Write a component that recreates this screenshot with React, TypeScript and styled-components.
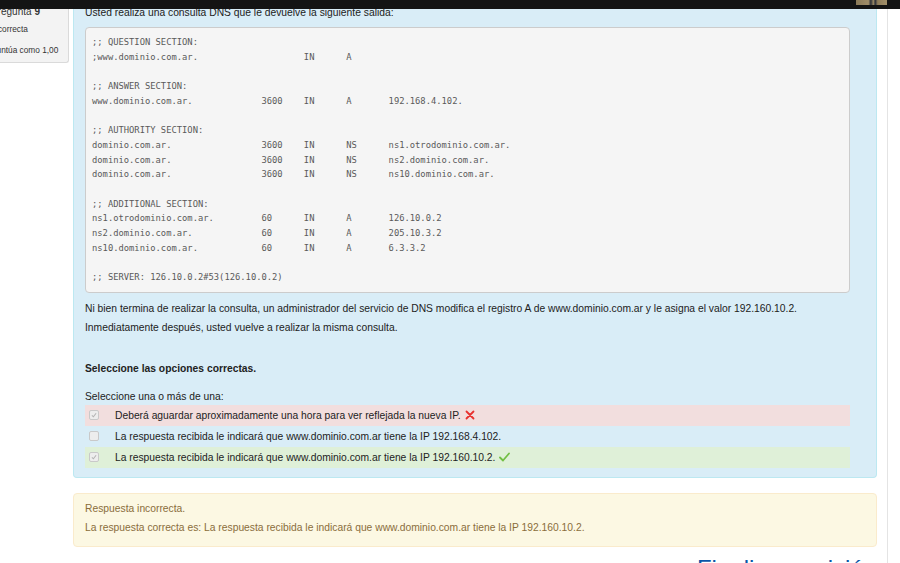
import styled, { createGlobalStyle } from 'styled-components';

const GlobalStyle = createGlobalStyle`
  html, body {
    margin: 0;
    padding: 0;
    background: #ffffff;
    font-family: "Liberation Sans", Arial, sans-serif;
    color: #333;
    overflow: hidden;
  }
`;

const TopBar = styled.div`
  position: fixed;
  top: 0;
  left: 0;
  right: 0;
  height: 9px;
  background: #141414;
  display: flex;
  justify-content: flex-end;
  padding-right: 13px;
  z-index: 10;
`;

const Avatar = styled.div`
  width: 31px;
  height: 5px;
  background: linear-gradient(90deg, #8b7a58 0%, #a08d68 40%, #2a2e38 48%, #9a8964 56%, #2c303a 62%, #8f7d5a 70%, #a3906a 100%);
`;

const Page = styled.div`
  display: flex;
  align-items: flex-start;
  height: 563px;
  overflow: hidden;
`;

const InfoBox = styled.div`
  flex: none;
  width: 78px;
  height: 63px;
  margin-left: -9px;
  box-sizing: border-box;
  background: #f3f3f3;
  border: 1px solid #dadada;
  border-top: none;
  border-left: none;
  border-radius: 0 0 3px 0;
  padding-top: 6px;
  font-size: 8.3px;
  color: #333;
`;

const QNo = styled.div`
  font-size: 10px;
  line-height: 12px;
  white-space: nowrap;

  b {
    font-weight: bold;
  }
`;

const InfoLine = styled.div<{ $top: number }>`
  margin-top: ${p => p.$top}px;
  line-height: 10px;
  white-space: nowrap;
`;

const Main = styled.div`
  flex: none;
  width: 804px;
  margin-left: 4px;
  display: flex;
  flex-direction: column;
`;

const Formulation = styled.div`
  background: #d9edf7;
  border: 1px solid #bce8f1;
  border-top: none;
  border-radius: 0 0 4px 4px;
  padding: 7px 26px 9px 11px;
  font-size: 10.3px;
  color: #222;
`;

const Intro = styled.p`
  margin: 0 0 8px;
  line-height: 12px;
`;

const Pre = styled.pre`
  margin: 0;
  padding: 7px 6px;
  background: #f5f5f5;
  border: 1px solid #cccccc;
  border-radius: 4px;
  font-family: "DejaVu Sans Mono", "Liberation Mono", monospace;
  font-size: 8.8px;
  line-height: 14.69px;
  color: #5a5a5a;
  tab-size: 8;
  white-space: pre;
  overflow: hidden;
`;

const Para = styled.p`
  margin: 6px 0 0;
  line-height: 19px;
`;

const Prompt = styled.p`
  margin: 22px 0 0;
  line-height: 19px;
  font-weight: bold;
`;

const Answer = styled.div`
  margin-top: 12px;
`;

const AnswerLabel = styled.div`
  line-height: 14px;
  margin-bottom: 1px;
`;

const Option = styled.div<{ $state?: 'wrong' | 'right' }>`
  height: 21px;
  display: flex;
  align-items: center;
  padding-left: 4px;
  background: ${p => (p.$state === 'wrong' ? '#f2dede' : p.$state === 'right' ? '#dff0d8' : 'transparent')};
  color: #222;
`;

const Check = styled.span<{ $checked?: boolean }>`
  flex: none;
  width: 8px;
  height: 8px;
  margin-right: 16px;
  border: 1px solid #c9c9c9;
  border-radius: 2px;
  background: #ededed;
  display: flex;
  align-items: center;
  justify-content: center;

  svg {
    display: ${p => (p.$checked ? 'block' : 'none')};
  }
`;

const Mark = styled.svg`
  margin-left: 4px;
  flex: none;
`;

const Feedback = styled.div`
  margin-top: 15px;
  background: #fcf8e3;
  border: 1px solid #faebcc;
  border-radius: 4px;
  padding: 5px 11px 9px;
  font-size: 10.3px;
  line-height: 19px;
  color: #8a6d3b;
`;

const Nav = styled.div`
  margin-top: 9px;
  display: flex;
  justify-content: flex-end;
`;

const NavLink = styled.a`
  font-size: 24px;
  line-height: 25px;
  color: #0a56a8;
  text-decoration: none;
  white-space: nowrap;
`;

const Gutter = styled.div`
  flex: none;
  align-self: stretch;
  width: 10px;
  border-right: 1px solid #e4e4e4;
`;

const dnsOutput = [
  ';; QUESTION SECTION:',
  ';www.dominio.com.ar.\t\t\tIN\tA',
  '',
  ';; ANSWER SECTION:',
  'www.dominio.com.ar.\t\t3600\tIN\tA\t192.168.4.102.',
  '',
  ';; AUTHORITY SECTION:',
  'dominio.com.ar.\t\t\t3600\tIN\tNS\tns1.otrodominio.com.ar.',
  'dominio.com.ar.\t\t\t3600\tIN\tNS\tns2.dominio.com.ar.',
  'dominio.com.ar.\t\t\t3600\tIN\tNS\tns10.dominio.com.ar.',
  '',
  ';; ADDITIONAL SECTION:',
  'ns1.otrodominio.com.ar.\t\t60\tIN\tA\t126.10.0.2',
  'ns2.dominio.com.ar.\t\t60\tIN\tA\t205.10.3.2',
  'ns10.dominio.com.ar.\t\t60\tIN\tA\t6.3.3.2',
  '',
  ';; SERVER: 126.10.0.2#53(126.10.0.2)',
].join('\n');

const TickSmall = () => (
  <svg width="6" height="6" viewBox="0 0 10 10">
    <polyline points="1.5,5.5 4,8 8.5,2" fill="none" stroke="#b5b5b5" strokeWidth="1.8" />
  </svg>
);

const Cross = () => (
  <Mark width="10" height="10" viewBox="0 0 10 10">
    <path d="M1.5 1.5 L8.5 8.5 M8.5 1.5 L1.5 8.5" stroke="#e8312f" strokeWidth="1.8" strokeLinecap="round" />
  </Mark>
);

const Tick = () => (
  <Mark width="11" height="10" viewBox="0 0 11 10">
    <path d="M1 5.5 L4 8.5 L10 1.5" fill="none" stroke="#72bf44" strokeWidth="1.8" strokeLinecap="round" strokeLinejoin="round" />
  </Mark>
);

const options = [
  { text: 'Deberá aguardar aproximadamente una hora para ver reflejada la nueva IP.', checked: true, state: 'wrong' as const },
  { text: 'La respuesta recibida le indicará que www.dominio.com.ar tiene la IP 192.168.4.102.', checked: false },
  { text: 'La respuesta recibida le indicará que www.dominio.com.ar tiene la IP 192.160.10.2.', checked: true, state: 'right' as const },
];

export default function App() {
  return (
    <>
      <GlobalStyle />
      <TopBar>
        <Avatar />
      </TopBar>
      <Page>
        <InfoBox>
          <QNo>
            Pregunta <b>9</b>
          </QNo>
          <InfoLine $top={6}>Incorrecta</InfoLine>
          <InfoLine $top={11}>Puntúa como 1,00</InfoLine>
        </InfoBox>
        <Main>
          <Formulation>
            <Intro>Usted realiza una consulta DNS que le devuelve la siguiente salida:</Intro>
            <Pre>{dnsOutput}</Pre>
            <Para>
              Ni bien termina de realizar la consulta, un administrador del servicio de DNS modifica el registro A de
              www.dominio.com.ar y le asigna el valor 192.160.10.2.
              <br />
              Inmediatamente después, usted vuelve a realizar la misma consulta.
            </Para>
            <Prompt>Seleccione las opciones correctas.</Prompt>
            <Answer>
              <AnswerLabel>Seleccione una o más de una:</AnswerLabel>
              {options.map(o => (
                <Option key={o.text} $state={o.state}>
                  <Check $checked={o.checked}>
                    <TickSmall />
                  </Check>
                  {o.text}
                  {o.state === 'wrong' && <Cross />}
                  {o.state === 'right' && <Tick />}
                </Option>
              ))}
            </Answer>
          </Formulation>
          <Feedback>
            Respuesta incorrecta.
            <br />
            La respuesta correcta es: La respuesta recibida le indicará que www.dominio.com.ar tiene la IP 192.160.10.2.
          </Feedback>
          <Nav>
            <NavLink href="#">Finalizar revisión</NavLink>
          </Nav>
        </Main>
        <Gutter />
      </Page>
    </>
  );
}
